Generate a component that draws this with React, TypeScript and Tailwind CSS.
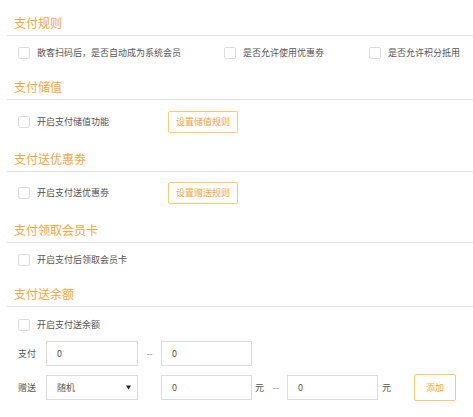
import React from "react";

const font = { fontFamily: '"Noto Sans CJK SC", "Noto Sans", sans-serif' };

function Header({ title, className = "" }: { title: string; className?: string }) {
  return (
    <div className={className}>
      <div className="pl-[14px] text-[12px] leading-[16px] text-[#f7a43c]">{title}</div>
      <div className="ml-[7px] mt-[4px] h-px bg-[#e2e2e2]" />
    </div>
  );
}

function Check({ label }: { label: string }) {
  return (
    <label className="flex items-center gap-[7px]">
      <span className="block h-[12px] w-[12px] rounded-[2px] border border-[#dcdcdc] bg-white" />
      <span className="text-[9px] leading-[12px] text-[#555]">{label}</span>
    </label>
  );
}

function OrangeButton({ children, className = "" }: { children: React.ReactNode; className?: string }) {
  return (
    <button
      className={`flex items-center justify-center rounded-[2px] border border-[#fcc870] bg-white text-[9px] text-[#f7a43c] ${className}`}
    >
      {children}
    </button>
  );
}

function Box({ value, className = "" }: { value: string; className?: string }) {
  return (
    <div
      className={`flex items-center border border-[#dcdcdc] bg-white pl-[10px] text-[9px] text-[#555] ${className}`}
    >
      {value}
    </div>
  );
}

export default function App() {
  return (
    <div className="min-h-[417px] w-[473px] bg-white pt-[15px]" style={font}>
      <Header title="支付规则" />
      <div className="mt-[11px] flex h-[12px] items-center pl-[18px]">
        <div className="w-[206px]">
          <Check label="散客扫码后，是否自动成为系统会员" />
        </div>
        <div className="w-[145px]">
          <Check label="是否允许使用优惠劵" />
        </div>
        <Check label="是否允许积分抵用" />
      </div>

      <Header title="支付储值" className="mt-[20px]" />
      <div className="mt-[11px] flex h-[22px] items-center pl-[18px]">
        <div className="w-[150px]">
          <Check label="开启支付储值功能" />
        </div>
        <OrangeButton className="h-[22px] w-[70px]">设置储值规则</OrangeButton>
      </div>

      <Header title="支付送优惠劵" className="mt-[18px]" />
      <div className="mt-[10px] flex h-[22px] items-center pl-[18px]">
        <div className="w-[150px]">
          <Check label="开启支付送优惠劵" />
        </div>
        <OrangeButton className="h-[22px] w-[70px]">设置赠送规则</OrangeButton>
      </div>

      <Header title="支付领取会员卡" className="mt-[18px]" />
      <div className="mt-[11px] flex h-[12px] items-center pl-[18px]">
        <Check label="开启支付后领取会员卡" />
      </div>

      <Header title="支付送余额" className="mt-[20px]" />
      <div className="mt-[12px] flex h-[12px] items-center pl-[18px]">
        <Check label="开启支付送余额" />
      </div>

      <div className="mt-[10px] flex h-[25px] items-center pl-[18px] text-[9px] text-[#555]">
        <span className="w-[28px]">支付</span>
        <Box value="0" className="h-[25px] w-[92px]" />
        <span className="w-[23px] text-center text-[#888]">--</span>
        <Box value="0" className="h-[25px] w-[91px]" />
      </div>

      <div className="mt-[8px] flex h-[27px] items-center pl-[18px] text-[9px] text-[#555]">
        <span className="w-[28px]">赠送</span>
        <div className="flex h-[25px] w-[92px] items-center justify-between border border-[#dcdcdc] bg-white pl-[10px] pr-[6px] text-[9px] text-[#555]">
          <span>随机</span>
          <svg width="5" height="5" viewBox="0 0 5 5">
            <path d="M0 0.5 H5 L2.5 4.5 Z" fill="#222" />
          </svg>
        </div>
        <span className="w-[23px]" />
        <Box value="0" className="h-[25px] w-[91px]" />
        <span className="ml-[3px] w-[18px]">元</span>
        <span className="w-[14px] text-[#888]">--</span>
        <Box value="0" className="h-[25px] w-[91px]" />
        <span className="ml-[4px] w-[32px]">元</span>
        <OrangeButton className="h-[27px] w-[42px]">添加</OrangeButton>
      </div>
    </div>
  );
}
